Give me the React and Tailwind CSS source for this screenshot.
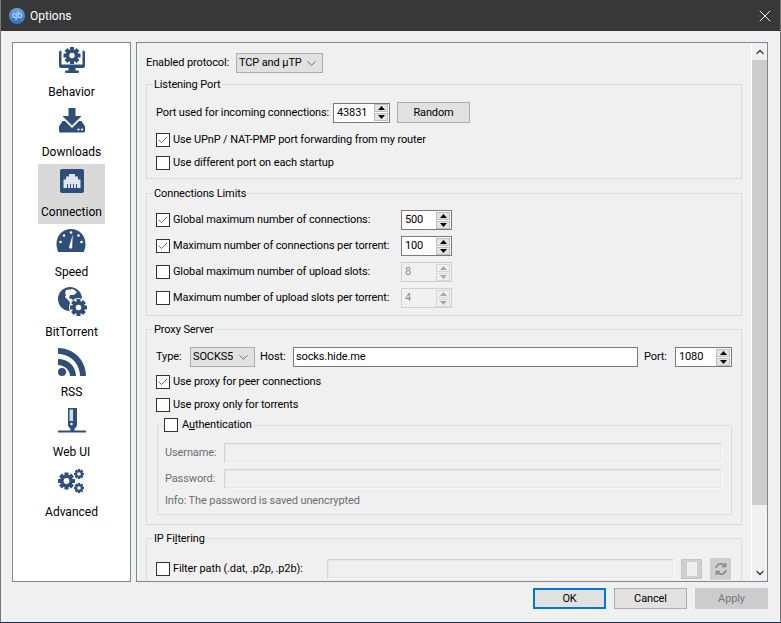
import { Check, X, ChevronDown, ChevronUp } from "lucide-react"

const navy = "#2f4f79"

const Gear = ({ cx, cy, r, hole, color = navy, teeth = 8 }) => {
  const items = []
  for (let i = 0; i < teeth; i++) {
    const a = (360 / teeth) * i
    items.push(<rect key={i} x={cx - r * 0.24} y={cy - r} width={r * 0.48} height={r * 0.5} transform={`rotate(${a} ${cx} ${cy})`} fill={color} />)
  }
  return (
    <g>
      {items}
      <circle cx={cx} cy={cy} r={r * 0.74} fill={color} />
      <circle cx={cx} cy={cy} r={hole} fill="#fff" />
    </g>
  )
}

const BehaviorIcon = () => (
  <svg width="32" height="32" viewBox="0 0 32 32">
    <path d="M3 5.500a2 2 0 0 1 2-2h22a2 2 0 0 1 2 2V19a2 2 0 0 1-2 2H5a2 2 0 0 1-2-2z" fill={navy} />
    <rect x="5.500" y="3" width="21" height="14.500" fill="#fff" />
    <rect x="12.500" y="21" width="7" height="3" fill={navy} />
    <rect x="9" y="23.500" width="14" height="2.500" rx="1" fill={navy} />
    <Gear cx={16} cy={8.500} r={8.500} hole={2.700} />
  </svg>
)

const DownloadsIcon = () => (
  <svg width="32" height="32" viewBox="0 0 32 32">
    <path d="M12.500 1h7v8h6L16 18.500 6.500 9h6z" fill={navy} />
    <path d="M6.500 14h2.500l7 7 7-7h2.500l3.500 5.500V24a1.500 1.500 0 0 1-1.500 1.500h-23A1.500 1.500 0 0 1 3 24v-4.500z" fill={navy} />
    <circle cx="22.500" cy="22.500" r="1.100" fill="#fff" />
    <circle cx="26" cy="22.500" r="1.100" fill="#fff" />
  </svg>
)

const ConnectionIcon = () => (
  <svg width="32" height="32" viewBox="0 0 32 32">
    <rect x="4" y="2" width="24" height="24" rx="2" fill={navy} />
    <path d="M13 7h6v2.500h3v3h2.500V21h-17v-8.500H10v-3h3z" fill="#dfe6ef" />
    <path d="M11.500 17v4M14.500 17v4M17.500 17v4M20.500 17v4" stroke={navy} strokeWidth="1" />
  </svg>
)

const SpeedIcon = () => (
  <svg width="32" height="32" viewBox="0 0 32 32">
    <path d="M16 2C7.700 2 1.500 8.500 1.500 17c0 3 .7 5.500 1.800 8h25.400c1.100-2.500 1.800-5 1.800-8C30.500 8.500 24.300 2 16 2z" fill={navy} />
    <path d="M17.800 7.500l-.6 11.500a1.700 1.700 0 1 1-2.800-.2z" fill="#fff" />
    <circle cx="16" cy="5.500" r="1.300" fill="#fff" />
    <circle cx="9" cy="8.500" r="1.300" fill="#fff" />
    <circle cx="23.500" cy="8.500" r="1.300" fill="#fff" />
    <circle cx="5.500" cy="15" r="1.300" fill="#fff" />
    <circle cx="26.500" cy="15" r="1.300" fill="#fff" />
  </svg>
)

const BitTorrentIcon = () => (
  <svg width="32" height="32" viewBox="0 0 32 32">
    <circle cx="14" cy="12" r="12" fill={navy} />
    <path d="M10 3l7-1 4 3-3 3h-4l-1 3 3 1 1 3-2 2-3-4-3-3 1-2-1-2z" fill="#fff" />
    <circle cx="22.500" cy="20.500" r="9.500" fill="#fff" />
    <Gear cx={22.500} cy={20.500} r={8.500} hole={2.800} />
  </svg>
)

const RssIcon = () => (
  <svg width="32" height="32" viewBox="0 0 32 32">
    <circle cx="6" cy="25" r="4" fill={navy} />
    <path d="M2 12v6c6.500 0 12 5 12 11h6C20 19 12 12 2 12z" fill={navy} />
    <path d="M2 1v6c12.500 0 22 10 22 22h6C30 13 17.500 1 2 1z" fill={navy} />
  </svg>
)

const WebUiIcon = () => (
  <svg width="32" height="32" viewBox="0 0 32 32">
    <path d="M12 1h9v16.500a4.500 4.500 0 0 1-9 0z" fill={navy} />
    <rect x="13.500" y="2.500" width="3.500" height="11.500" fill="#d6dde7" />
    <circle cx="15.500" cy="17" r="1.200" fill="#fff" />
    <rect x="2" y="23.500" width="28" height="2" fill={navy} />
    <rect x="14.500" y="21" width="4" height="3" fill={navy} />
  </svg>
)

const AdvancedIcon = () => (
  <svg width="32" height="32" viewBox="0 0 32 32">
    <Gear cx={11.500} cy={14} r={8.500} hole={2.900} />
    <Gear cx={24} cy={7} r={5} hole={1.800} />
    <Gear cx={24} cy={21} r={5} hole={1.800} />
  </svg>
)

const NavItem = ({ icon, label, active }) => (
  <div className={`flex h-[60px] flex-col items-center px-[3px] pt-[3px] text-[12px] tracking-normal text-black ${active ? "bg-[#d9d9d9]" : ""}`}>
    <div className="h-[36px]">{icon}</div>
    <div className="mt-[1px] whitespace-nowrap">{label}</div>
  </div>
)

const CheckBox = ({ checked }) => (
  <span className="flex h-[14px] w-[14px] shrink-0 items-center justify-center border border-[#333] bg-white">
    {checked && <Check size={12} strokeWidth={1.600} color="#444" />}
  </span>
)

const CheckRow = ({ checked, children, className = "" }) => (
  <label className={`flex items-center gap-[3px] whitespace-nowrap ${className}`}>
    <CheckBox checked={checked} />
    <span>{children}</span>
  </label>
)

const Arrow = ({ up, color }) => (
  <svg width="7" height="4" viewBox="0 0 7 4">
    <path d={up ? "M3.500 0L7 4H0z" : "M0 0h7L3.500 4z"} fill={color} />
  </svg>
)

const Spin = ({ value, width, disabled }) => (
  <div className={`flex h-[20px] shrink-0 items-center justify-between border pl-[3px] pr-[1px] ${width} ${disabled ? "border-[#cfcfcf] bg-[#f0f0f0] text-[#8a8a8a]" : "border-[#7a7a7a] bg-white text-black"}`}>
    <span>{value}</span>
    <div className="flex w-[14px] flex-col gap-[1px]">
      <span className={`flex h-[8px] items-center justify-center border ${disabled ? "border-[#d8d8d8] bg-[#efefef]" : "border-[#bdbdbd] bg-[#e3e3e3]"}`}><Arrow up color={disabled ? "#a8a8a8" : "#000"} /></span>
      <span className={`flex h-[8px] items-center justify-center border ${disabled ? "border-[#d8d8d8] bg-[#efefef]" : "border-[#bdbdbd] bg-[#e3e3e3]"}`}><Arrow color={disabled ? "#a8a8a8" : "#000"} /></span>
    </div>
  </div>
)

const Select = ({ value, width }) => (
  <div className={`flex h-[20px] shrink-0 items-center justify-between whitespace-nowrap border border-[#adadad] bg-[#e1e1e1] pl-[2px] pr-[3px] ${width}`}>
    <span>{value}</span>
    <ChevronDown size={15} strokeWidth={1} color="#333" />
  </div>
)

const DisabledInput = ({ width }) => (
  <div className={`h-[20px] shrink-0 border border-b-[#f7f7f7] border-l-[#d4d4d4] border-r-[#f7f7f7] border-t-[#d4d4d4] bg-[#f0f0f0] outline-1 -outline-offset-2 outline-[#e6e6e6] ${width}`} />
)

const Group = ({ title, className = "", children }) => (
  <fieldset className={`border border-[#dcdcdc] px-[9px] ${className}`}>
    <legend className="ml-[-3px] px-[1px] pt-[2px] leading-[14px]">{title}</legend>
    {children}
  </fieldset>
)

const Button = ({ children, kind }) => {
  const look = kind === "default"
    ? "border-2 border-[#0078d7] bg-[#e1e1e1] text-black"
    : kind === "disabled"
      ? "border border-[#cccccc] bg-[#cccccc] text-[#787878]"
      : "border border-[#adadad] bg-[#e1e1e1] text-black"
  return <div className={`flex h-[21px] w-[73px] items-center justify-center ${look}`}>{children}</div>
}

export default function App() {
  return (
    <div className="flex h-[623px] w-[781px] flex-col overflow-hidden border-x border-b border-x-[#777] border-b-[#1c2c44] bg-[#f0f0f0] font-['Roboto',sans-serif] text-[11px] leading-[16px] tracking-[-0.12px] text-black">
      <div className="flex h-[31px] shrink-0 items-center justify-between bg-[#383838] pl-[8px] pr-[5px] text-white">
        <div className="flex items-center gap-[5px]">
          <div className="flex h-[16px] w-[16px] items-center justify-center rounded-full bg-linear-to-b from-[#6aa5e6] to-[#2f6fc0] text-[9px] leading-none text-[#dbe9fa]">qb</div>
          <span className="text-[12px] tracking-normal">Options</span>
        </div>
        <X size={20} strokeWidth={1.100} color="#fff" />
      </div>

      <div className="flex min-h-0 flex-1 gap-[5px] pl-[11px] pr-[12px] pt-[11px]">
        <div className="flex h-[540px] w-[119px] shrink-0 flex-col items-center border border-[#828790] bg-white pt-[1px]">
          <NavItem icon={<BehaviorIcon />} label="Behavior" />
          <NavItem icon={<DownloadsIcon />} label="Downloads" />
          <NavItem icon={<ConnectionIcon />} label="Connection" active />
          <NavItem icon={<SpeedIcon />} label="Speed" />
          <NavItem icon={<BitTorrentIcon />} label="BitTorrent" />
          <NavItem icon={<RssIcon />} label="RSS" />
          <NavItem icon={<WebUiIcon />} label="Web UI" />
          <NavItem icon={<AdvancedIcon />} label="Advanced" />
        </div>

        <div className="flex h-[540px] min-w-0 flex-1 border border-[#828790]">
          <div className="min-w-0 flex-1 overflow-hidden pl-[9px] pr-[9px] pt-[10px]">
            <div className="flex items-center whitespace-nowrap">
              <span className="w-[90px]">Enabled protocol:</span>
              <Select value="TCP and µTP" width="w-[87px]" />
            </div>

            <Group title="Listening Port" className="mt-[3px] h-[103px]">
              <div className="mt-[10px] flex items-center whitespace-nowrap">
                <span className="w-[177px]">Port used for incoming connections:</span>
                <Spin value="43831" width="w-[57px]" />
                <div className="ml-[7px] flex h-[21px] w-[73px] items-center justify-center border border-[#adadad] bg-[#e1e1e1]">Random</div>
              </div>
              <CheckRow checked className="mt-[7px] h-[20px]">Use UPnP / NAT-PMP port forwarding from my router</CheckRow>
              <CheckRow className="mt-[3px] h-[20px]">Use different port on each startup</CheckRow>
            </Group>

            <Group title="Connections Limits" className="mt-[6px] h-[131px]">
              {[
                ["Global maximum number of connections:", "500", true],
                ["Maximum number of connections per torrent:", "100", true],
                ["Global maximum number of upload slots:", "8", false],
                ["Maximum number of upload slots per torrent:", "4", false],
              ].map(([label, value, on], i) => (
                <div key={label} className={`flex h-[20px] w-[296px] items-center justify-between ${i === 0 ? "mt-[9px]" : "mt-[6px]"}`}>
                  <CheckRow checked={on}>{label}</CheckRow>
                  <Spin value={value} width="w-[51px]" disabled={!on} />
                </div>
              ))}
            </Group>

            <Group title="Proxy Server" className="mt-[5px] h-[204px]">
              <div className="mt-[10px] flex items-center whitespace-nowrap">
                <span className="w-[34px]">Type:</span>
                <Select value="SOCKS5" width="w-[65px]" />
                <span className="ml-[5px] w-[33px]">Host:</span>
                <div className="flex h-[20px] w-[345px] items-center border border-[#7a7a7a] bg-white pl-[2px]">socks.hide.me</div>
                <span className="ml-[6px] w-[31px]">Port:</span>
                <Spin value="1080" width="w-[57px]" />
              </div>
              <CheckRow checked className="mt-[5px] h-[20px]">Use proxy for peer connections</CheckRow>
              <CheckRow className="mt-[3px] h-[20px]">Use proxy only for torrents</CheckRow>
              <fieldset className="ml-[1px] mt-[3px] h-[97px] border border-[#dcdcdc] pl-[7px]">
                <legend className="ml-[-1px] flex items-center gap-[4px] pr-[1px] leading-[14px]">
                  <CheckBox />
                  <span>A<span className="underline">u</span>thentication</span>
                </legend>
                <div className="mt-[11px] flex items-center text-[#6d6d6d]">
                  <span className="w-[59px] whitespace-nowrap">Username:</span>
                  <DisabledInput width="w-[498px]" />
                </div>
                <div className="mt-[6px] flex items-center text-[#6d6d6d]">
                  <span className="w-[59px] whitespace-nowrap">Password:</span>
                  <DisabledInput width="w-[498px]" />
                </div>
                <div className="mt-[4px] text-[#6d6d6d]">Info: The password is saved unencrypted</div>
              </fieldset>
            </Group>

            <Group title={<span>IP Fi<span className="underline">l</span>tering</span>} className="mt-[5px] h-[80px]">
              <div className="mt-[12px] flex items-center">
                <CheckRow className="w-[171px]">Filter path (.dat, .p2p, .p2b):</CheckRow>
                <DisabledInput width="w-[347px]" />
                <div className="ml-[7px] flex h-[20px] w-[21px] items-center justify-center border border-[#c4c4c4] bg-[#cfcfcf]">
                  <div className="h-[14px] w-[10px] bg-[#efefef]" />
                </div>
                <div className="ml-[8px] flex h-[22px] w-[21px] items-center justify-center bg-[#cfcfcf]">
                  <svg width="14" height="14" viewBox="0 0 14 14" fill="none" stroke="#8a8a8a" strokeWidth="1.600">
                    <path d="M2 6a5 5 0 0 1 9-2M12 8a5 5 0 0 1-9 2" />
                    <path d="M11.500 1v3.500H8M2.500 13V9.500H6" />
                  </svg>
                </div>
              </div>
            </Group>
          </div>

          <div className="flex w-[16px] shrink-0 flex-col items-center border-l border-white bg-[#f0f0f0]">
            <div className="flex h-[17px] items-center justify-center"><ChevronUp size={12} strokeWidth={2.400} color="#333" /></div>
            <div className="h-[445px] w-[15px] bg-[#cdcdcd]" />
            <div className="flex-1" />
            <div className="flex h-[17px] items-center justify-center"><ChevronDown size={12} strokeWidth={2.400} color="#333" /></div>
          </div>
        </div>
      </div>

      <div className="flex justify-end gap-[8px] pb-[13px] pr-[12px]">
        <Button kind="default">OK</Button>
        <Button>Cancel</Button>
        <Button kind="disabled">Apply</Button>
      </div>
    </div>
  )
}
